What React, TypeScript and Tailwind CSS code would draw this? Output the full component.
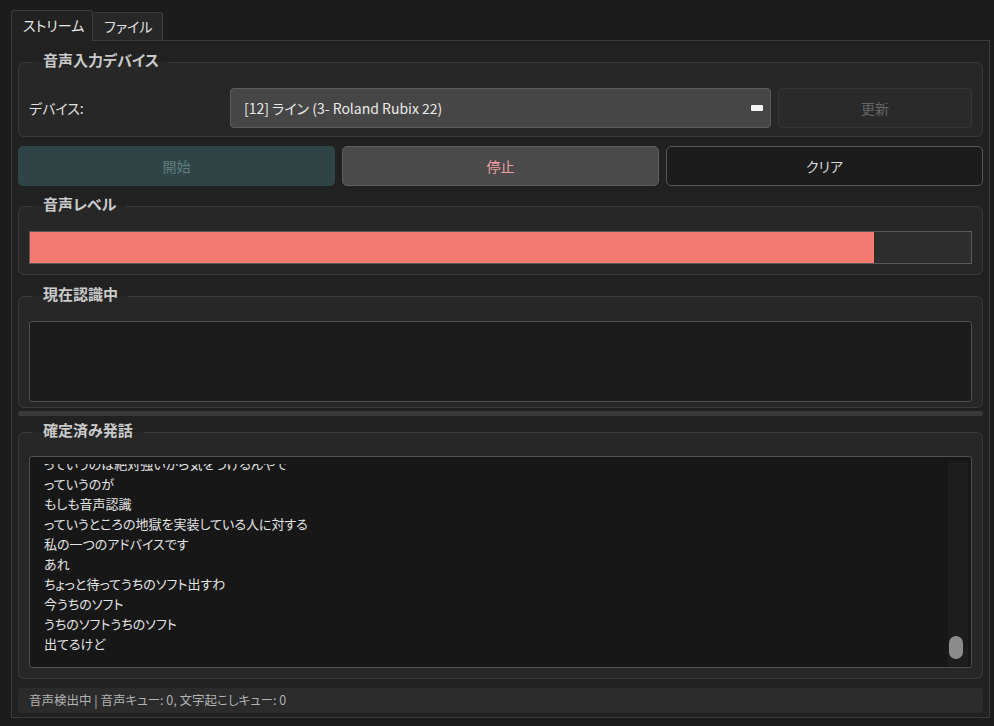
import React from "react";

const transcript = [
  "っていうのは絶対強いから気をつけるんやで",
  "っていうのが",
  "もしも音声認識",
  "っていうところの地獄を実装している人に対する",
  "私の一つのアドバイスです",
  "あれ",
  "ちょっと待ってうちのソフト出すわ",
  "今うちのソフト",
  "うちのソフトうちのソフト",
  "出てるけど",
];

const level = 89.7;

function Group({
  title,
  className = "",
  children,
}: {
  title: string;
  className?: string;
  children: React.ReactNode;
}) {
  return (
    <fieldset
      className={`m-0 min-w-0 rounded-[6px] border border-[#393939] bg-[#272727] px-[10px] py-0 ${className}`}
    >
      <legend className="ml-[4px] px-[10px] pb-[4px] text-[15px] font-bold leading-[20px] text-[#cacaca]">
        {title}
      </legend>
      {children}
    </fieldset>
  );
}

export default function App() {
  return (
    <div className="flex h-[726px] w-[994px] flex-col overflow-hidden bg-[#1c1c1c] pb-[8px] pl-[11px] pr-[4px] pt-[10px] font-['Noto_Sans_CJK_JP',sans-serif] text-[#e2e2e2] [font-feature-settings:'palt']">
      {/* tab bar */}
      <div className="flex h-[30px] items-end">
        <div className="relative z-10 -mb-px flex h-[31px] w-[82px] items-center rounded-t-[3px] border border-b-0 border-[#3c3c3c] bg-[#222222] pb-[2px] pl-[11px] text-[14px] text-[#e6e6e6]">
          ストリーム
        </div>
        <div className="flex h-[28px] w-[70px] items-center rounded-t-[3px] border border-b-0 border-l-0 border-[#3c3c3c] bg-[#272727] pl-[11px] text-[14px] text-[#e0e0e0]">
          ファイル
        </div>
      </div>

      {/* tab pane */}
      <div className="flex flex-1 flex-col border border-[#3a3a3a] bg-[#212121] pl-[6px] pr-[6px]">
        <Group title="音声入力デバイス" className="mt-[9px]">
          <div className="flex items-center pb-[8px] pt-[14px]">
            <div className="w-[201px] text-[14px] text-[#e0e0e0]">デバイス:</div>
            <div className="flex h-[40px] flex-1 items-center justify-between rounded-[4px] border border-[#5c5c5c] bg-[#464646] pl-[13px] pr-[7px] text-[14px] text-[#eaeaea]">
              <span>[12] ライン (3- Roland Rubix 22)</span>
              <span className="h-[6px] w-[12px] rounded-[1px] bg-[#f2f2f2]" />
            </div>
            <div className="ml-[7px] flex h-[40px] w-[194px] items-center justify-center rounded-[4px] border border-[#363636] bg-[#2a2a2a] text-[14px] text-[#666666]">
              更新
            </div>
          </div>
        </Group>

        {/* control buttons */}
        <div className="mt-[9px] grid h-[40px] grid-cols-3 gap-[7px]">
          <div className="flex items-center justify-center rounded-[5px] bg-[#2f4545] text-[14px] text-[#5f7d7d]">
            開始
          </div>
          <div className="flex items-center justify-center rounded-[5px] border border-[#5e5e5e] bg-[#4a4a4a] text-[14px] text-[#eea0a0]">
            停止
          </div>
          <div className="flex items-center justify-center rounded-[5px] border border-[#575757] bg-[#1c1c1c] text-[14px] text-[#dadada]">
            クリア
          </div>
        </div>

        <Group title="音声レベル" className="mt-[8px]">
          <div className="pb-[10px] pt-[13px]">
            <div className="flex h-[33px] border border-[#5a5a5a] bg-[#2d2d2d]">
              <div className="h-full bg-[#f47a72]" style={{ width: `${level}%` }} />
            </div>
          </div>
        </Group>

        <Group title="現在認識中" className="mt-[9px]">
          <div className="pb-[5px] pt-[13px]">
            <div className="h-[81px] rounded-[3px] border border-[#4f4f4f] bg-[#1b1b1b]" />
          </div>
        </Group>

        {/* splitter handle */}
        <div className="mt-[3px] h-[5px] rounded-[2px] bg-[#3a3a3a]" />

        <Group title="確定済み発話" className="mt-[4px]">
          <div className="pb-[10px] pt-[12px]">
            <div className="flex h-[212px] rounded-[3px] border border-[#4f4f4f] bg-[#171717]">
              <div className="mt-[7px] flex-1 overflow-hidden pl-[14px]">
                <div className="-mt-[10px] text-[13px] leading-[20px] text-[#e4e4e4]">
                  {transcript.map((line, i) => (
                    <div key={i} className="whitespace-nowrap">
                      {line}
                    </div>
                  ))}
                </div>
              </div>
              {/* vertical scrollbar */}
              <div className="mb-[1px] mr-[3px] mt-[5px] flex w-[20px] flex-col justify-end bg-[#1d1d1d] pb-[7px] pl-[1px]">
                <div className="h-[23px] w-[14px] rounded-full bg-[#8b8b8b]" />
              </div>
            </div>
          </div>
        </Group>

        {/* status bar */}
        <div className="mt-[9px] flex h-[25px] items-center rounded-[3px] bg-[#2b2b2b] pl-[11px] text-[12.5px] text-[#b2b2b2]">
          音声検出中 | 音声キュー: 0, 文字起こしキュー: 0
        </div>
      </div>
    </div>
  );
}
